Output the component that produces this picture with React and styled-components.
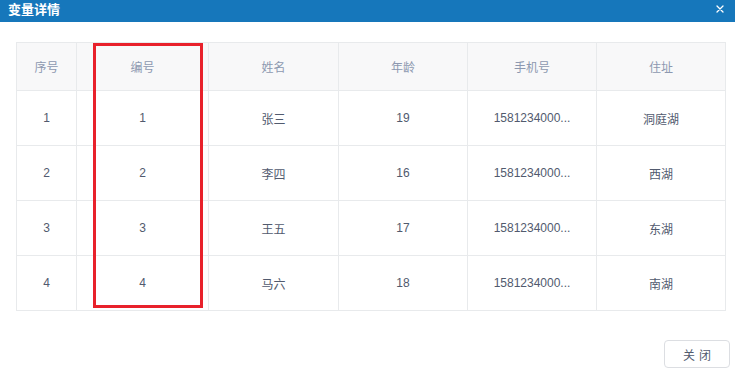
import React from 'react';
import styled, { createGlobalStyle } from 'styled-components';

const GlobalStyle = createGlobalStyle`
  html, body {
    margin: 0;
    padding: 0;
    background: #ffffff;
    font-family: "Liberation Sans", "Noto Sans CJK SC", sans-serif;
  }
`;

const Modal = styled.div`
  width: 735px;
  height: 376px;
  background: #ffffff;
  display: flex;
  flex-direction: column;
  overflow: hidden;
`;

const TitleBar = styled.div`
  height: 22px;
  background: #1677bb;
  display: flex;
  align-items: center;
  justify-content: space-between;
  padding: 0 11px 4px 8px;
  box-sizing: border-box;
`;

const Title = styled.span`
  color: #ffffff;
  font-size: 13px;
  font-weight: bold;
  line-height: 1;
`;

const CloseIcon = styled.svg`
  width: 8px;
  height: 8px;
  display: block;
`;

const Body = styled.div`
  padding: 20px 9px 0 16px;
`;

const TableWrap = styled.div`
  position: relative;
  width: 710px;
`;

const Table = styled.table`
  table-layout: fixed;
  border-collapse: separate;
  border-spacing: 0;
  width: 710px;
  border-top: 1px solid #e8eaec;
  border-left: 1px solid #e8eaec;
  font-size: 12px;
`;

const Th = styled.th`
  height: 47px;
  padding: 0;
  background: #f8f8f9;
  color: #8d98b0;
  font-weight: normal;
  text-align: center;
  border-right: 1px solid #e8eaec;
  border-bottom: 1px solid #e8eaec;
`;

const Td = styled.td`
  height: 54px;
  padding: 0 8px;
  color: #515a6e;
  text-align: center;
  border-right: 1px solid #e8eaec;
  border-bottom: 1px solid #e8eaec;
  white-space: nowrap;
  overflow: hidden;
`;

const Highlight = styled.div`
  position: absolute;
  left: 77px;
  top: 1px;
  width: 110px;
  height: 265px;
  box-sizing: border-box;
  border: 3px solid #e8212b;
  pointer-events: none;
`;

const Footer = styled.div`
  display: flex;
  justify-content: flex-end;
  padding: 29px 5px 0 0;
`;

const Button = styled.button`
  width: 66px;
  height: 28px;
  background: #ffffff;
  border: 1px solid #dcdee2;
  border-radius: 4px;
  color: #515a6e;
  font-size: 12px;
  font-family: "Noto Sans CJK SC", sans-serif;
  letter-spacing: 4px;
  padding: 0 0 0 4px;
`;

const columns = [
  { key: 'index', title: '序号', width: 60 },
  { key: 'code', title: '编号', width: 132 },
  { key: 'name', title: '姓名', width: 130 },
  { key: 'age', title: '年龄', width: 129 },
  { key: 'phone', title: '手机号', width: 129 },
  { key: 'addr', title: '住址', width: 129 },
];

const rows = [
  { index: 1, code: 1, name: '张三', age: 19, phone: '1581234000...', addr: '洞庭湖' },
  { index: 2, code: 2, name: '李四', age: 16, phone: '1581234000...', addr: '西湖' },
  { index: 3, code: 3, name: '王五', age: 17, phone: '1581234000...', addr: '东湖' },
  { index: 4, code: 4, name: '马六', age: 18, phone: '1581234000...', addr: '南湖' },
];

export default function App() {
  return (
    <>
      <GlobalStyle />
      <Modal>
        <TitleBar>
          <Title>变量详情</Title>
          <CloseIcon viewBox="0 0 8 8">
            <path d="M1 1L7 7M7 1L1 7" stroke="#ffffff" strokeWidth="1.3" strokeLinecap="round" />
          </CloseIcon>
        </TitleBar>
        <Body>
          <TableWrap>
            <Table>
              <colgroup>
                {columns.map((c) => (
                  <col key={c.key} style={{ width: c.width }} />
                ))}
              </colgroup>
              <thead>
                <tr>
                  {columns.map((c) => (
                    <Th key={c.key}>{c.title}</Th>
                  ))}
                </tr>
              </thead>
              <tbody>
                {rows.map((r) => (
                  <tr key={r.index}>
                    {columns.map((c) => (
                      <Td key={c.key}>{r[c.key]}</Td>
                    ))}
                  </tr>
                ))}
              </tbody>
            </Table>
            <Highlight />
          </TableWrap>
        </Body>
        <Footer>
          <Button>关闭</Button>
        </Footer>
      </Modal>
    </>
  );
}
